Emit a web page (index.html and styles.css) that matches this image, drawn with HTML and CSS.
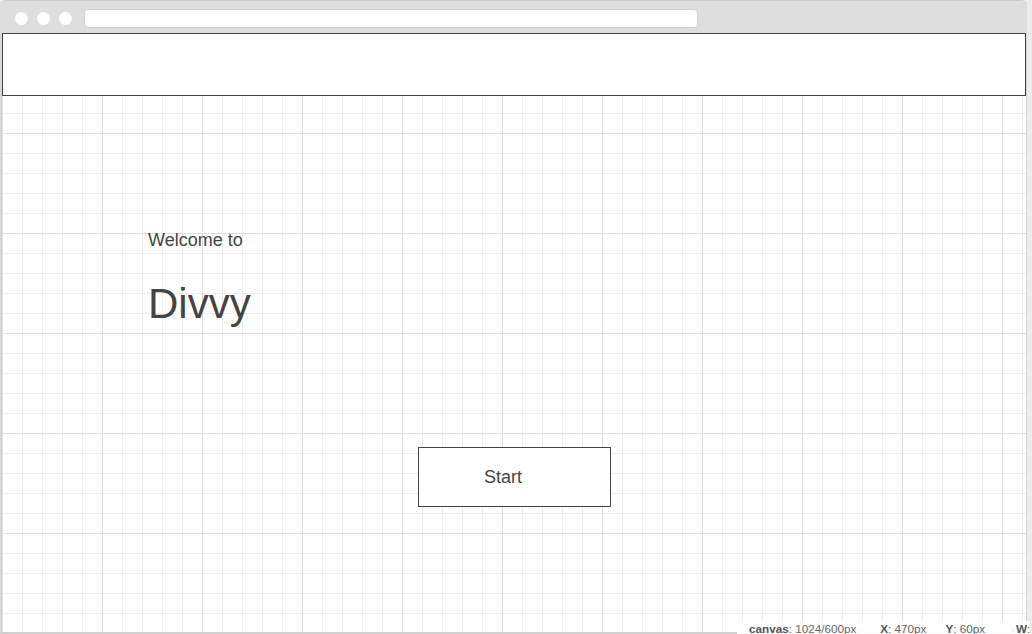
FILE: index.html
```html
<!DOCTYPE html>
<html lang="en">
<head>
<meta charset="utf-8">
<title>Divvy</title>
<link rel="stylesheet" href="styles.css">
</head>
<body>
  <div class="window">
    <div class="chrome">
      <div class="dots">
        <span class="dot"></span>
        <span class="dot"></span>
        <span class="dot"></span>
      </div>
      <div class="address"></div>
    </div>
    <div class="canvas">
      <div class="header-box"></div>
      <div class="hero">
        <p class="welcome">Welcome to</p>
        <h1 class="title">Divvy</h1>
      </div>
      <div class="start-row">
        <div class="start-btn">Start</div>
      </div>
      <div class="status">
        <span class="stat stat-canvas"><b>canvas</b>: 1024/600px</span>
        <span class="stat stat-x"><b>X</b>: 470px</span>
        <span class="stat stat-y"><b>Y</b>: 60px</span>
        <span class="stat"><b>W</b>:</span>
      </div>
    </div>
  </div>
</body>
</html>
```

FILE: styles.css
```css
html, body {
  margin: 0;
  padding: 0;
  height: 634px;
  overflow: hidden;
  background: #ececec;
  font-family: "Liberation Sans", Arial, Helvetica, sans-serif;
}

.window {
  width: 1024px;
  border-left: 2px solid #d6d6d6;
  border-right: 1px solid #d6d6d6;
  border-bottom: 2px solid #d0d0d0;
  border-radius: 6px 6px 0 0;
  background: #ffffff;
}

.chrome {
  box-sizing: border-box;
  height: 33px;
  margin-left: -2px;
  margin-right: -1px;
  padding: 2px 0 0 15px;
  background: #dedede;
  border-top: 1px solid #cdcdcd;
  border-radius: 6px 6px 0 0;
  display: flex;
  align-items: center;
}

.dots {
  display: flex;
  gap: 9px;
}

.dot {
  width: 13px;
  height: 13px;
  border-radius: 50%;
  background: #ffffff;
}

.address {
  box-sizing: border-box;
  margin-left: 12px;
  width: 614px;
  height: 19px;
  background: #ffffff;
  border: 1px solid #d2d2d2;
  border-radius: 4px;
}

.canvas {
  position: relative;
  height: 599px;
  background-color: #ffffff;
  background-image:
    linear-gradient(to right, #dfdfdf 1px, transparent 1px),
    linear-gradient(to bottom, #dfdfdf 1px, transparent 1px),
    linear-gradient(to right, #eeeeee 1px, transparent 1px),
    linear-gradient(to bottom, #eeeeee 1px, transparent 1px);
  background-size: 100px 100px, 100px 100px, 20px 20px, 20px 20px;
  color: #444444;
}

.header-box {
  box-sizing: border-box;
  height: 63px;
  background: #ffffff;
  border: 1px solid #444444;
}

.hero {
  padding: 134px 0 0 146px;
}

.welcome {
  margin: 0;
  font-size: 18px;
  line-height: 21px;
  font-weight: normal;
}

.title {
  margin: 29px 0 0 0;
  font-size: 42px;
  line-height: 48px;
  font-weight: normal;
}

.start-row {
  padding: 119px 0 0 416px;
}

.start-btn {
  box-sizing: border-box;
  width: 193px;
  height: 60px;
  padding: 19px 0 0 65px;
  background: #ffffff;
  border: 1px solid #444444;
  font-size: 18px;
  line-height: 21px;
}

.status {
  position: absolute;
  left: 735px;
  right: -4px;
  top: 588px;
  height: 16px;
  padding: 1px 0 0 12px;
  display: flex;
  background: rgba(255, 255, 255, 0.92);
  color: #666666;
  font-size: 11.7px;
  line-height: 14px;
  white-space: nowrap;
}

.stat b {
  color: #555555;
}

.stat-canvas {
  margin-right: 24px;
}

.stat-x {
  margin-right: 19px;
}

.stat-y {
  margin-right: 31px;
}
```
